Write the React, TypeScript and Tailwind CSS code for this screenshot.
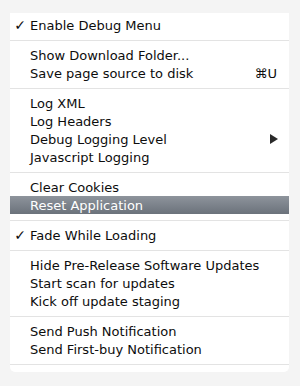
import React from 'react';

type Item =
  | { kind: 'sep' }
  | { kind: 'item'; label: string; checked?: boolean; shortcut?: string; submenu?: boolean; active?: boolean };

const items: Item[] = [
  { kind: 'item', label: 'Enable Debug Menu', checked: true },
  { kind: 'sep' },
  { kind: 'item', label: 'Show Download Folder...' },
  { kind: 'item', label: 'Save page source to disk', shortcut: '⌘U' },
  { kind: 'sep' },
  { kind: 'item', label: 'Log XML' },
  { kind: 'item', label: 'Log Headers' },
  { kind: 'item', label: 'Debug Logging Level', submenu: true },
  { kind: 'item', label: 'Javascript Logging' },
  { kind: 'sep' },
  { kind: 'item', label: 'Clear Cookies' },
  { kind: 'item', label: 'Reset Application', active: true },
  { kind: 'sep' },
  { kind: 'item', label: 'Fade While Loading', checked: true },
  { kind: 'sep' },
  { kind: 'item', label: 'Hide Pre-Release Software Updates' },
  { kind: 'item', label: 'Start scan for updates' },
  { kind: 'item', label: 'Kick off update staging' },
  { kind: 'sep' },
  { kind: 'item', label: 'Send Push Notification' },
  { kind: 'item', label: 'Send First-buy Notification' },
  { kind: 'sep' },
];

const App: React.FC = () => {
  return (
    <div className="w-[300px] h-[386px] bg-[#f4f4f4] pt-[13px] pl-[10px] font-['DejaVu_Sans',sans-serif]">
      <div className="w-[279px] bg-white rounded-b-[5px] pt-[3px] pb-[2px]">
        {items.map((item, i) => {
          if (item.kind === 'sep') {
            return (
              <div key={i} className="pt-[6px] pb-[5px]">
                <div className="h-px bg-[#e3e3e3]" />
              </div>
            );
          }
          return (
            <div
              key={i}
              className={`h-[18px] flex items-center text-[13px] leading-none ${
                item.active
                  ? 'bg-gradient-to-b from-[#8e949c] to-[#6b727b] text-white'
                  : 'text-[#0d0d0d]'
              }`}
            >
              <span className="w-[20px] flex justify-end pr-[4px] text-[14px]">{item.checked ? '✓' : ''}</span>
              <span className="flex-1">{item.label}</span>
              {item.shortcut && <span className="pr-[12px]">{item.shortcut}</span>}
              {item.submenu && (
                <svg width="8" height="10" viewBox="0 0 8 10" className="mr-[11px]">
                  <path d="M0 0 L8 5 L0 10 Z" fill="#2a2a2a" />
                </svg>
              )}
            </div>
          );
        })}
      </div>
    </div>
  );
};

export default App;
